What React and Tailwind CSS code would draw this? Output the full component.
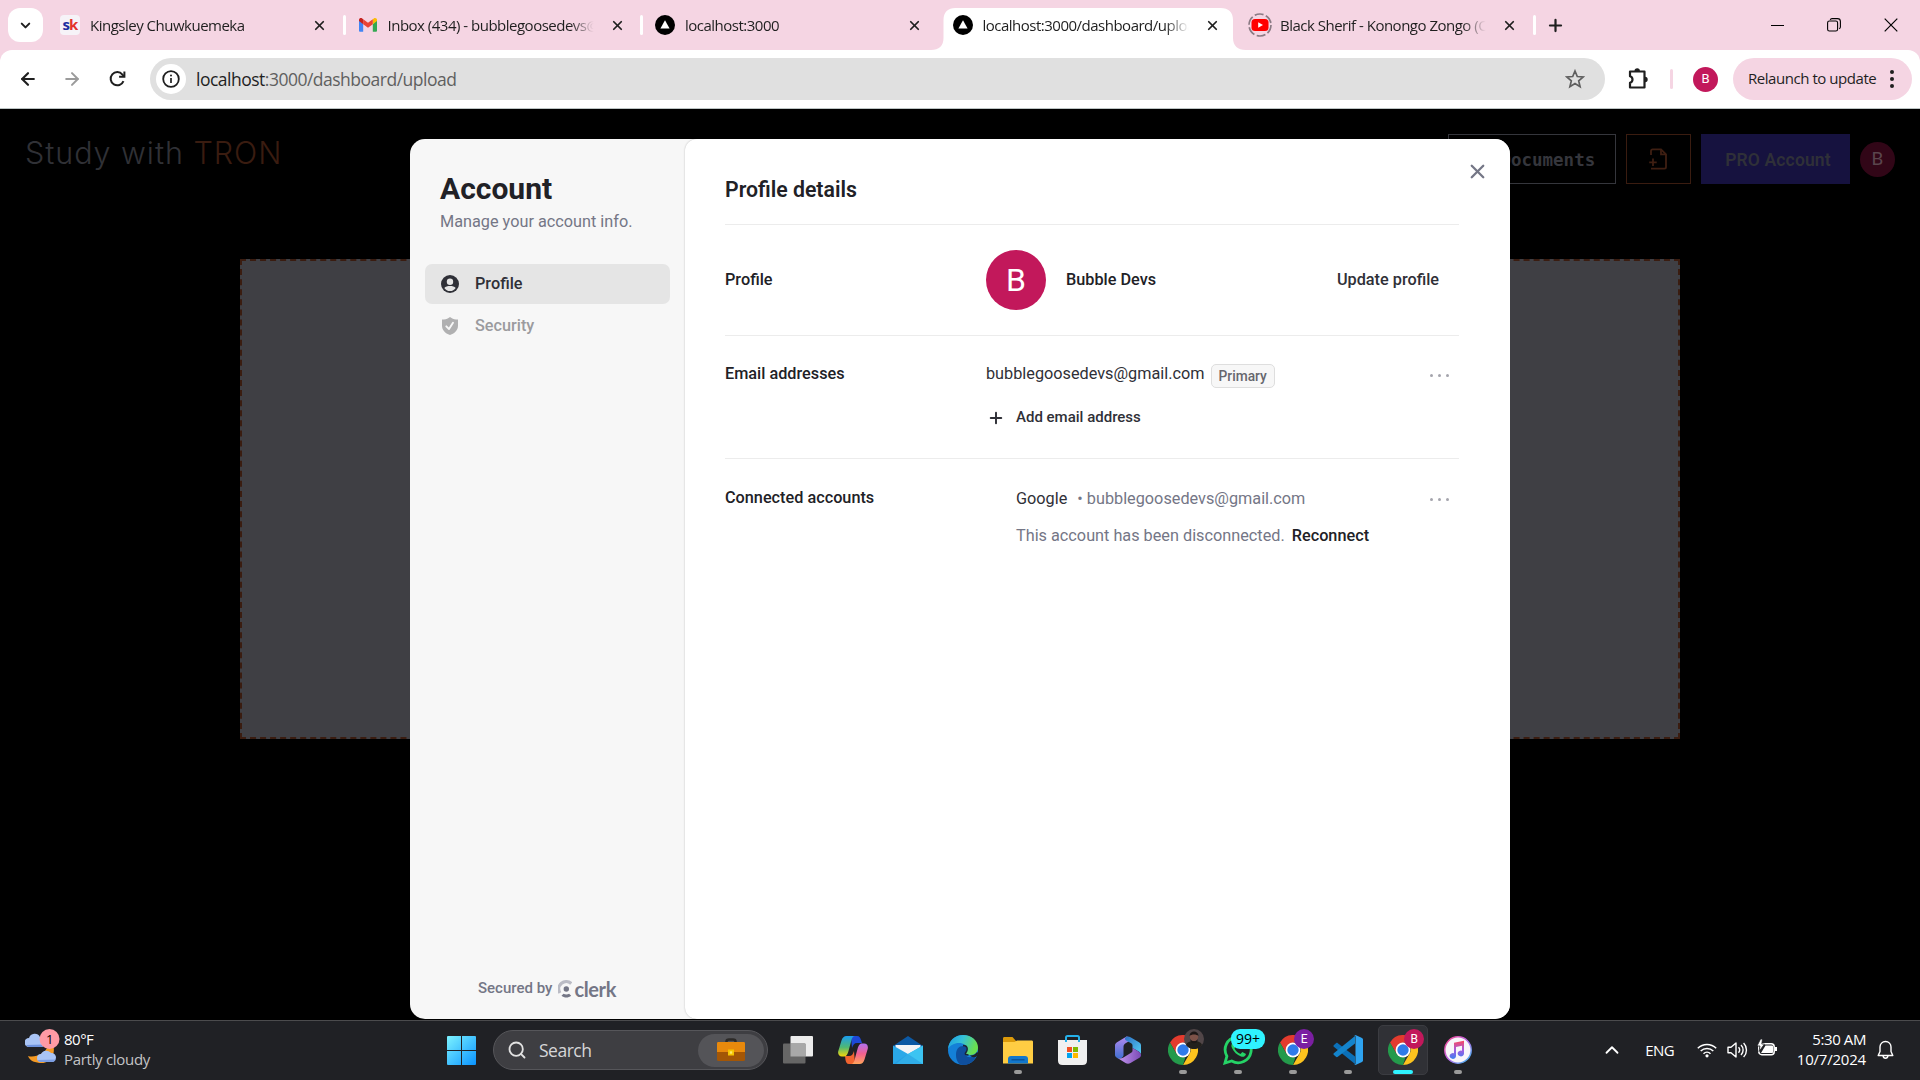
import {
  ArrowLeft,
  ArrowRight,
  ChevronDown,
  ChevronUp,
  Plus,
  Search,
  X,
} from "lucide-react";

const TABS = [
  { key: "sk", title: "Kingsley Chuwkuemeka", icon: SkIcon },
  { key: "mail", title: "Inbox (434) - bubblegoosedevs@", icon: GmailIcon },
  { key: "local", title: "localhost:3000", icon: NextIcon },
  { key: "upload", title: "localhost:3000/dashboard/uploa", icon: NextIcon, active: true },
  { key: "yt", title: "Black Sherif - Konongo Zongo (O", icon: YoutubeIcon },
];

function SkIcon() {
  return (
    <div className="w-5 h-5 rounded bg-[#f6f3f8] flex items-center justify-center text-[15px] leading-none font-bold tracking-[-0.8px] font-['Open_Sans',sans-serif] pb-0.5">
      <span className="text-[#1c2fa0]">s</span>
      <span className="text-[#e2332d]">k</span>
    </div>
  );
}

function GmailIcon() {
  return (
    <svg width="20" height="20" viewBox="0 0 20 20">
      <path d="M1 5v10.5c0 .8.5 1.3 1.200 1.300H5.200V9z" fill="#4285f4" />
      <path d="M19 5v10.500c0 .8-.5 1.300-1.200 1.300H14.800V9z" fill="#34a853" />
      <path d="M14.800 4.200V9.200L19 6V4.800c0-1.700-2-2.500-3.200-1.400z" fill="#fbbc04" />
      <path d="M5.200 9.200V4.200L10 7.800l4.800-3.600v5L10 12.800z" fill="#ea4335" />
      <path d="M1 4.800V6l4.200 3.200v-5l-1-.8C3 2.500 1 3.200 1 4.800z" fill="#c5221f" />
    </svg>
  );
}

function NextIcon() {
  return (
    <svg width="20" height="20" viewBox="0 0 20 20">
      <circle cx="10" cy="10" r="10" fill="#000" />
      <path d="M10 5.200l4.600 8.300H5.400z" fill="#fff" />
    </svg>
  );
}

function YoutubeIcon() {
  return (
    <svg width="24" height="24" viewBox="0 0 24 24" className="-ml-0.5 -mr-0.5 max-w-none">
      <circle cx="12" cy="12" r="11" fill="none" stroke="#8a7a84" strokeWidth="1.700" strokeDasharray="9 2.520" />
      <rect x="3.500" y="6" width="17" height="12" rx="3.500" fill="#f00" />
      <path d="M10.200 9.300v5.400l4.800-2.700z" fill="#fff" />
    </svg>
  );
}

function Tab({ title, icon: Icon, active }) {
  return (
    <div className="relative w-[297.5px] h-full pl-3 pt-[3px] flex items-center">
      {active && (
        <svg className="absolute left-[-10px] top-2" width="316" height="42" viewBox="0 0 316 42">
          <path d="M0 42c8 0 12.500-4 12.500-12V12C12.500 4 17 0 24.500 0h265c8 0 12.500 4 12.500 12v18c0 8 5 12 12.500 12z" fill="#fff" />
        </svg>
      )}
      <div className="relative flex items-center w-full pb-[3px]">
        <div className="w-5 shrink-0">
          <Icon />
        </div>
        <div className="ml-2.5 pb-px w-[212px] shrink-0 overflow-hidden whitespace-nowrap text-[15px] leading-5 tracking-[-0.5px] text-[#1f1f1f] [mask-image:linear-gradient(to_right,#000_86%,transparent_97%)]">
          {title}
        </div>
        <X size={15} strokeWidth={2.8} className="ml-[10px] text-[#1f1f1f]" />
      </div>
      {!active && title !== "localhost:3000" && (
        <div className="absolute right-0 top-[15px] w-[3px] h-5 rounded bg-white" />
      )}
    </div>
  );
}

function TabStrip() {
  return (
    <div className="h-[50px] shrink-0 bg-[#f5d5e3] flex items-center pl-2 font-['Open_Sans',sans-serif]">
      <div className="w-[35px] h-[34px] rounded-xl bg-white flex items-center justify-center mr-[5px]">
        <ChevronDown size={15} strokeWidth={3.2} className="text-[#1f1f1f]" />
      </div>
      {TABS.map((t) => (
        <Tab key={t.key} title={t.title} icon={t.icon} active={t.active} />
      ))}
      <Plus size={19} strokeWidth={2.800} className="ml-[10px] text-[#1f1f1f]" />
      <div className="ml-auto flex items-center pr-[22px] gap-[43px]">
        <div className="w-[13px] h-px bg-black" />
        <svg width="14" height="14" viewBox="0 0 14 14" fill="none" stroke="#000" strokeWidth="1.100">
          <rect x="0.600" y="3" width="10" height="10" rx="1.800" />
          <path d="M3.200 1.900C3.500 1 4.200.6 5 .6h5.500c1.700 0 2.900 1.200 2.900 2.900V9c0 .8-.4 1.400-1.200 1.800" />
        </svg>
        <svg width="14" height="14" viewBox="0 0 14 14" fill="none" stroke="#000" strokeWidth="1.200">
          <path d="M.7.7l12.600 12.600M13.300.7L.7 13.300" />
        </svg>
      </div>
    </div>
  );
}

function Toolbar() {
  return (
    <div className="bg-[#f5d5e3] shrink-0">
      <div className="h-[59px] bg-white rounded-t-xl border-b border-[#bcc4c4] flex items-center pl-[18px] pr-2 font-['Open_Sans',sans-serif]">
        <ArrowLeft size={20} strokeWidth={2.600} className="text-[#1f1f1f]" />
        <ArrowRight size={20} strokeWidth={2.400} className="ml-6 text-[#9b9b9b]" />
        <svg className="ml-[27px]" width="17" height="18" viewBox="0 0 18 18" fill="none" stroke="#1f1f1f" strokeWidth="2.100">
          <path d="M15.300 11.200A7 7 0 1 1 14.200 4.300L16 6.300" />
          <path d="M16.300 1v5.600h-5.600" />
        </svg>
        <div className="ml-[24px] w-[1455px] h-[42px] rounded-full bg-[#e0e0e0] flex items-center pl-1.5 pr-5">
          <div className="w-[30px] h-[30px] rounded-full bg-white flex items-center justify-center">
            <svg width="18" height="18" viewBox="0 0 18 18">
              <circle cx="9" cy="9" r="7.800" fill="none" stroke="#1f1f1f" strokeWidth="1.800" />
              <path d="M9 8v5" stroke="#1f1f1f" strokeWidth="1.700" />
              <circle cx="9" cy="5.600" r="1" fill="#1f1f1f" />
            </svg>
          </div>
          <span className="ml-2.5 pt-px text-[17.5px] tracking-[-0.5px] text-[#5f5f5f]">
            <span className="text-[#1f1f1f]">localhost</span>:3000/dashboard/upload
          </span>
          <svg className="ml-auto" width="20" height="20" viewBox="0 0 20 20" fill="none" stroke="#5f5f5f" strokeWidth="1.700">
            <path d="M10 2l2.300 5.500 5.900.5-4.500 3.900 1.400 5.800L10 14.600l-5.100 3.100 1.400-5.800L1.800 8l5.900-.5z" />
          </svg>
        </div>
        <svg className="ml-[22px]" width="22" height="24" viewBox="0 0 22 24" fill="none" stroke="#1f1f1f" strokeWidth="2.200">
          <path d="M3 4.500h14.500v16H3v-4.800a3.300 3.300 0 0 0 0-6.400z" strokeLinejoin="round" />
          <path d="M7.500 4a2.700 2.700 0 0 1 5.400 0zM18 9.800a2.700 2.700 0 0 1 0 5.400z" fill="#1f1f1f" stroke="none" />
        </svg>
        <div className="ml-[21px] w-[3px] h-5 rounded bg-[#f5d5e3]" />
        <div className="ml-5 w-[25px] h-[25px] rounded-full bg-[#c2185b] text-white text-[13px] font-['Roboto',sans-serif] flex items-center justify-center">
          B
        </div>
        <div className="ml-auto w-[179px] h-[42px] rounded-full bg-[#f5d5e3] flex items-center pl-[15px] pr-[18px]">
          <span className="pb-px text-[15px] tracking-[-0.45px] whitespace-nowrap text-[#1f1f1f]">
            Relaunch to update
          </span>
          <div className="ml-auto flex flex-col gap-[3px]">
            <div className="w-1 h-1 rounded-full bg-[#1f1f1f]" />
            <div className="w-1 h-1 rounded-full bg-[#1f1f1f]" />
            <div className="w-1 h-1 rounded-full bg-[#1f1f1f]" />
          </div>
        </div>
      </div>
    </div>
  );
}

function Dashboard() {
  return (
    <div className="h-full bg-black">
      <header className="h-[100px] pl-[25px] pr-[25px] pt-[25px] flex items-start">
        <h1 className="text-[30.5px] leading-[38px] font-light tracking-[0.95px] text-[#303136] font-['Inter',sans-serif] whitespace-nowrap">
          Study with <span className="text-[#3a1c10]">TRON</span>
        </h1>
        <div className="ml-auto flex items-center">
          <div className="w-[168px] h-[50px] border border-[#35363c] pt-0.5 flex items-center justify-center text-[#35363c] text-[17.5px] font-bold font-['DejaVu_Sans_Mono',monospace] whitespace-nowrap">
            My Documents
          </div>
          <div className="ml-2.5 w-[65px] h-[50px] border border-[#3a1c10] flex items-center justify-center">
            <svg width="20" height="22" viewBox="0 0 20 22" fill="none" stroke="#3f1f12" strokeWidth="1.800" className="-ml-0.5">
              <path d="M3 7V3c0-1 .6-1.600 1.600-1.600H13l5 5V19c0 1-.6 1.600-1.600 1.600H3" />
              <path d="M13 1.400v5h5M5 10.500v7.500M1.200 14.300h7.500" />
            </svg>
          </div>
          <div className="ml-2.5 w-[149px] h-[50px] pl-[5px] pt-0.5 bg-[#16123f] flex items-center justify-center text-[#2f3038] text-[17.5px] tracking-[0.15px] font-semibold font-['Roboto',sans-serif]">
            PRO Account
          </div>
          <div className="ml-2.5 w-[35px] h-[35px] rounded-full bg-[#310617] flex items-center justify-center text-[#5a454d] text-[19px] font-['Roboto',sans-serif]">
            B
          </div>
        </div>
      </header>
      <div className="mx-auto mt-[50px] w-[1440px] h-[480px] bg-[#3f3f44] border-2 border-dashed border-[#3a1c10]" />
    </div>
  );
}

function MoreDots() {
  return (
    <div className="flex gap-[5px]">
      <div className="w-[3px] h-[3px] rounded-full bg-[#a5a5ad]" />
      <div className="w-[3px] h-[3px] rounded-full bg-[#a5a5ad]" />
      <div className="w-[3px] h-[3px] rounded-full bg-[#a5a5ad]" />
    </div>
  );
}

function Sidebar() {
  return (
    <div className="w-[275px] shrink-0 flex flex-col px-[15px] pt-[30px] pb-5">
      <h2 className="px-[15px] text-[30px] leading-10 font-bold text-[#212126]">
        Account
      </h2>
      <p className="px-[15px] mt-0.5 text-[16.25px] leading-[22px] text-[#747686]">
        Manage your account info.
      </p>
      <div className="mt-[31px] w-[245px] h-10 rounded-[7px] bg-[#e5e5e5] flex items-center px-4 text-[#2f3037]">
        <svg width="18" height="18" viewBox="0 0 18 18">
          <circle cx="9" cy="9" r="9" fill="#2f3037" />
          <circle cx="9" cy="6.700" r="3.200" fill="#e5e5e5" />
          <path d="M3.300 13c1.200-1.600 3.200-2 5.700-2s4.500.4 5.700 2A7 7 0 0 1 9 16.100 7 7 0 0 1 3.300 13z" fill="#e5e5e5" />
        </svg>
        <span className="ml-4 text-[16.25px] font-medium">Profile</span>
      </div>
      <div className="mt-0.5 w-[245px] h-10 flex items-center px-4 text-[#9b9b9e]">
        <svg width="18" height="18" viewBox="0 0 18 18">
          <path d="M9 0l1.500 1c1.800 1 3.700 1.500 6.500 1.500v6c0 4.700-3 7.700-8 9.500-5-1.800-8-4.800-8-9.500v-6c2.800 0 4.700-.5 6.500-1.500z" fill="#b0b0b1" />
          <path d="M5.300 9.300L8 12l4-6.300" fill="none" stroke="#f7f7f7" strokeWidth="1.900" strokeLinecap="round" strokeLinejoin="round" />
        </svg>
        <span className="ml-4 text-[16.25px] font-medium">Security</span>
      </div>
      <div className="mt-auto pl-[53px] flex items-center text-[#747686]">
        <span className="text-[15px] font-medium">Secured by</span>
        <svg className="ml-1.5 mt-0.5" width="14" height="18" viewBox="0 0 14 18">
          <path d="M13.300 3.500A7.500 7.500 0 0 0 1.900 13" fill="none" stroke="#bbbcc5" strokeWidth="3.200" />
          <circle cx="8.300" cy="9" r="2.700" fill="#747686" />
          <path d="M3.500 15.800l2-2c1.700 1 3.900 1 5.600 0l2.100 2c-2.700 2.400-7 2.400-9.700 0z" fill="#747686" />
        </svg>
        <span className="ml-0.5 mt-0.5 text-[20px] leading-5 font-bold tracking-[-0.35px] font-['Lato',sans-serif]">
          clerk
        </span>
      </div>
    </div>
  );
}

function ProfilePanel() {
  return (
    <div className="relative flex-1 bg-white rounded-xl pl-10 pr-[51px] shadow-[0_0_2px_rgba(0,0,0,0.25)] text-[16.25px] text-[#212126]">
      <X size={23} strokeWidth={2.400} className="absolute right-[21px] top-[21px] text-[#747686]" />
      <div className="h-[86px] border-b border-[#ececec] pt-[36.5px] text-[21.25px] leading-7 font-semibold">
        Profile details
      </div>
      <div className="h-[111px] border-b border-[#ececec] flex items-center">
        <div className="w-[261px] font-medium">Profile</div>
        <div className="w-[60px] h-[60px] rounded-full bg-[#c2185b] text-white text-[32px] flex items-center justify-center">
          B
        </div>
        <div className="ml-5 font-medium">Bubble Devs</div>
        <div className="ml-auto mr-5 font-medium text-[#2f3037]">Update profile</div>
      </div>
      <div className="h-[123px] border-b border-[#ececec] flex items-start pt-[27px]">
        <div className="w-[261px] leading-[22px] font-medium">Email addresses</div>
        <div>
          <div className="flex items-start leading-[22px]">
            <span className="text-[#2f3037]">bubblegoosedevs@gmail.com</span>
            <span className="ml-[6px] mt-[1px] h-6 px-[7px] rounded-[5px] border border-[#dedede] bg-[#f7f7f7] text-[13.75px] leading-[23px] font-medium text-[#66666d]">
              Primary
            </span>
          </div>
          <div className="mt-[18px] ml-px flex items-center leading-[22px] text-[#2f3037]">
            <Plus size={18} strokeWidth={2.600} className="mt-px" />
            <span className="ml-[11px] text-[15px] font-medium">Add email address</span>
          </div>
        </div>
        <div className="ml-auto mr-2.5 mt-[11px]">
          <MoreDots />
        </div>
      </div>
      <div className="flex items-start pt-[28px]">
        <div className="w-[291px] leading-[22px] font-medium">Connected accounts</div>
        <div className="mt-px">
          <div className="leading-[22px] flex">
            <span className="text-[#2f3037]">Google</span>
            <span className="ml-[10px] text-[#747686]">• bubblegoosedevs@gmail.com</span>
          </div>
          <div className="mt-[15px] leading-[22px] text-[#747686]">
            This account has been disconnected.
            <span className="ml-[7px] font-medium text-[#212126]">Reconnect</span>
          </div>
        </div>
        <div className="ml-auto mr-2.5 mt-[11px]">
          <MoreDots />
        </div>
      </div>
    </div>
  );
}

function AccountModal() {
  return (
    <div className="w-[1100px] h-[880px] rounded-[15px] overflow-hidden bg-[#f7f7f7] flex font-['Roboto',sans-serif]">
      <Sidebar />
      <ProfilePanel />
    </div>
  );
}

function WeatherIcon() {
  return (
    <svg width="36" height="36" viewBox="0 0 36 36">
      <path d="M3 27c7 2 17-2 20-10l5-2c3 10-2 19-11 19C10 34 5 32 3 27z" fill="#f59a23" />
      <path d="M4 18a4.500 4.500 0 0 1 0-9 6 6 0 0 1 11-1c3 0 5 2 5 5s-2 5-4 5z" fill="#a9c4f5" />
      <path d="M1 16c1 1.500 2 2 4 2h11c2 0 3-1 4-2.500z" fill="#6f93dd" />
      <path d="M16 33a4 4 0 0 1 0-8 6 6 0 0 1 10-1c3 0 5 2 5 4.500S29 33 27 33z" fill="#a9c4f5" />
      <path d="M12.500 31c1 1.500 2 2 3.500 2h11c2 0 3-1 3.800-2.500z" fill="#7b9de2" />
      <circle cx="24.500" cy="10" r="10" fill="#ff9aa5" />
    </svg>
  );
}

function WindowsIcon() {
  return (
    <svg width="29" height="29" viewBox="0 0 29 29">
      <defs>
        <linearGradient id="win" x1="0" y1="0" x2="29" y2="29" gradientUnits="userSpaceOnUse">
          <stop offset="0" stopColor="#7df3ff" />
          <stop offset="1" stopColor="#0a93ff" />
        </linearGradient>
      </defs>
      <path d="M0 1a1 1 0 0 1 1-1h13v14H0zM15 0h13a1 1 0 0 1 1 1v13H15zM0 15h14v14H1a1 1 0 0 1-1-1zM15 15h14v13a1 1 0 0 1-1 1H15z" fill="url(#win)" />
    </svg>
  );
}

function BriefcaseIcon() {
  return (
    <svg width="28" height="24" viewBox="0 0 28 24">
      <path d="M9.500 5V3.500C9.500 2 10.500 1.500 12 1.500h4c1.500 0 2.500.5 2.500 2V5" fill="none" stroke="#2c2a28" strokeWidth="2.500" />
      <rect y="4" width="28" height="19" rx="1.500" fill="#a35606" />
      <path d="M0 5.500C0 4.500.5 4 1.500 4h25c1 0 1.500.5 1.500 1.500V14H0z" fill="#e8890c" />
      <rect x="11" y="11.500" width="6" height="6" fill="#f5c400" />
      <rect x="12.800" y="13.300" width="2.400" height="2.400" fill="#ffe96b" />
    </svg>
  );
}

function TaskViewIcon() {
  return (
    <svg width="30" height="28" viewBox="0 0 30 28">
      <rect x="7.500" width="22.500" height="20.500" rx="1" fill="#ececec" />
      <rect y="7.500" width="22.500" height="20" rx="1" fill="#666" />
      <path d="M7.500 7.500h15v13h-15z" fill="#a8a8a8" />
    </svg>
  );
}

function CopilotIcon() {
  return (
    <svg width="30" height="28" viewBox="0 0 30 28">
      <defs>
        <linearGradient id="copA" x1="0" y1="0" x2="0" y2="1">
          <stop offset="0" stopColor="#1a9df0" />
          <stop offset=".55" stopColor="#4fb873" />
          <stop offset="1" stopColor="#f5d60a" />
        </linearGradient>
        <linearGradient id="copB" x1="0" y1="0" x2="0" y2="1">
          <stop offset="0" stopColor="#b070f0" />
          <stop offset=".5" stopColor="#f2608f" />
          <stop offset="1" stopColor="#ffa45a" />
        </linearGradient>
      </defs>
      <path d="M13 0h6c2.500 0 3.300 1.800 4 4l1 3h-5c-3 0-4 2-5 5z" fill="#1d48d8" />
      <path d="M17 28h-6c-2.500 0-3-2-3.500-4L7 20h4c3 0 4-2 5-5z" fill="#f0632f" />
      <path d="M8.500 0H17c-2 0-3 2-3.500 4L10.500 15c-1 3.500-2 5.500-5 5.500H4C1 20.500-.5 18 .3 15L3.500 4.500C4.500 1.500 6 0 8.500 0z" fill="url(#copA)" />
      <path d="M21.500 28H13c2 0 3-2 3.500-4l3-11c1-3.500 2-5.500 5-5.500H26c3 0 4.500 2.500 3.700 5.500l-3.200 10.500c-1 3-2.500 4.500-5 4.500z" fill="url(#copB)" />
    </svg>
  );
}

function MailIcon() {
  return (
    <svg width="30" height="28" viewBox="0 0 30 28">
      <path d="M0 10L15 0l15 10v4H0z" fill="#0c59a4" />
      <path d="M2.500 9h25v8l-12.500 5L2.500 17z" fill="#f4f4f6" />
      <path d="M0 9.500L15 18l15-8.500V28H0z" fill="#2aa8e8" />
      <path d="M30 9.500V28H3l12-10z" fill="#3cc4f2" />
      <path d="M15 18l15 10H0z" fill="#2193dc" opacity=".45" />
    </svg>
  );
}

function EdgeIcon() {
  return (
    <svg width="30" height="30" viewBox="0 0 30 30">
      <defs>
        <linearGradient id="edgeTop" x1="0" y1="0" x2="1" y2="0.300">
          <stop offset="0" stopColor="#1b9de2" />
          <stop offset=".5" stopColor="#35c1d8" />
          <stop offset="1" stopColor="#6adf4f" />
        </linearGradient>
      </defs>
      <circle cx="15" cy="15" r="15" fill="#1480d8" />
      <path d="M8 20c0-6 3-9 7-9 3 0 4 2 4 3.500C19 16 17.500 17 17.500 19c0 2.500 3 3.500 6 3 2.300-.4 3.800-1 4.800-1.300C26 26.500 21 30 15 30c-4 0-7-4-7-10z" fill="#0f4f9e" />
      <path d="M0 14C.8 5.500 7 0 15 0c9 0 15 6 15 12.500 0 4.500-3 7.500-7.500 7.500-3 0-5-.8-5-2 0-1 1.700-1.700 1.700-4 0-3.500-3.500-6-8.200-6C6 8 2 10.500 0 14z" fill="url(#edgeTop)" />
      <path d="M20.500 20c-3 0-3.500-1-3-2 .7-1 1.700-1.700 1.700-4 0-2.200-2-3.500-4.200-3.500" fill="none" stroke="#1b2436" strokeWidth="1.500" />
      <path d="M22 20.500c3 0 5.500-1 7-3.500l1.500 1-2 3.500c-2 1-5 1-6.500-1z" fill="#202125" />
    </svg>
  );
}

function ExplorerIcon() {
  return (
    <svg width="30" height="27" viewBox="0 0 30 27">
      <path d="M0 1.500C0 .5.500 0 1.500 0h8l3.500 4v6H0z" fill="#dc9a0a" />
      <path d="M0 5h11.500L14 3.500h14.500c1 0 1.500.5 1.500 1.500v21.500H0z" fill="#ffcd43" />
      <path d="M5 26.500V22c0-2 1-3 3-3h14c2 0 3 1 3 3v4.500z" fill="#1277cc" />
      <path d="M8.500 22.800h13" stroke="#0b4f93" strokeWidth="1.300" />
    </svg>
  );
}

function StoreIcon() {
  return (
    <svg width="29" height="30" viewBox="0 0 29 30" className="-ml-px">
      <path d="M8 7V2.500C8 1.500 8.500 1 9.500 1h10c1 0 1.500.5 1.500 1.500V7" fill="none" stroke="#25b1ea" strokeWidth="2" />
      <path d="M0 5h29v20.500c0 3-1.500 4.500-4.500 4.500h-20C1.500 30 0 28.500 0 25.500z" fill="#f0f0f0" />
      <path d="M8 5v2M21 5v2" stroke="#25b1ea" strokeWidth="2" />
      <path d="M9 12h5v5H9z" fill="#f25022" />
      <path d="M15 12h5v5h-5z" fill="#7fba00" />
      <path d="M9 18h5v5H9z" fill="#00a4ef" />
      <path d="M15 18h5v5h-5z" fill="#ffb900" />
    </svg>
  );
}

function OfficeIcon() {
  return (
    <svg width="26" height="28" viewBox="0 0 26 28">
      <defs>
        <linearGradient id="offA" x1="0" y1="0" x2="0" y2="1">
          <stop offset="0" stopColor="#b58af0" />
          <stop offset="1" stopColor="#3f6fd0" />
        </linearGradient>
        <linearGradient id="offB" x1="0" y1="0" x2="1" y2="1">
          <stop offset="0" stopColor="#2c6fc4" />
          <stop offset="1" stopColor="#55d0f5" />
        </linearGradient>
        <linearGradient id="offC" x1="0" y1="0" x2="1" y2="0">
          <stop offset="0" stopColor="#c79af2" />
          <stop offset="1" stopColor="#7a4ab5" />
        </linearGradient>
      </defs>
      <path d="M12 .3L2 6.300C.7 7.100 0 8.300 0 9.500V19c0 1.200.7 2 2 2.800l1 .7c2 .7 5-.5 5.500-3V11c0-1.500.5-2.700 1.700-3.500L16 4z" fill="url(#offA)" />
      <path d="M10.500 1.200c1.500-1 3.500-1 5 0l8.500 5c1.300.8 2 1.800 2 3V19c0-1.500-1-2.700-2.200-3.500L17.500 12V9.500c0-1-.5-1.700-1.300-2.200L11 4.500c-1-.7-1.500-2-.5-3.300z" fill="url(#offB)" />
      <path d="M2.500 22c1.500.8 3.800.7 5.500-.3l8.500-5.200c.6-.4 1-1 1-1.700V12l6.500 3.700c1.300.8 2 2 2 3.300s-.7 2.200-2 3l-8.500 5c-1.500.9-3.500.9-5 0z" fill="url(#offC)" />
    </svg>
  );
}

function ChromeIcon() {
  return (
    <svg width="30" height="30" viewBox="0 0 30 30">
      <path d="M2 7.500A15 15 0 0 1 28 7.500H15L8.500 18.700z" fill="#e33b2e" />
      <path d="M28 7.500A15 15 0 0 1 15 30l6.500-11.200A7.500 7.500 0 0 0 21.500 11L19 7.500z" fill="#fcc31e" />
      <path d="M2 7.500l6.500 11.200c2 3 5 4 9 3.200L15 30A15 15 0 0 1 2 7.500z" fill="#249a4b" />
      <circle cx="15" cy="15" r="7.400" fill="#fff" />
      <circle cx="15" cy="15" r="5.700" fill="#2f7bea" />
    </svg>
  );
}

function WhatsappIcon() {
  return (
    <svg width="30" height="30" viewBox="0 0 30 30">
      <path d="M2 28l1.900-6.800A13 13 0 1 1 8.700 26z" fill="none" stroke="#25d366" strokeWidth="2.800" />
      <path d="M10.500 7.500c-2 1-2.800 3-1.500 5.500 1.800 4 5 7 9 8.500 2.500 1 4.500-.3 5-2.500l-3.700-2-1.800 2c-2.800-1.200-4.700-3-6-5.500l1.500-2z" fill="#25d366" />
    </svg>
  );
}

function VscodeIcon() {
  return (
    <svg width="30" height="30" viewBox="0 0 30 30">
      <path d="M1 10l2-1.800c.6-.5 1.200-.5 1.800 0L22 21.500V29L.8 11.800c-.6-.6-.5-1.200.2-1.800z" fill="#0b70b8" />
      <path d="M1 20l2 1.800c.6.5 1.200.5 1.800 0L22 8.500V1L.8 18.200c-.6.6-.5 1.200.2 1.800z" fill="#1484cc" />
      <path d="M22.500 0l6 2.700c1 .5 1.500 1 1.500 2v20.600c0 1-.5 1.500-1.500 2l-6 2.700c-.8.3-1.300.1-1.800-.4 1 .5 1.800 0 1.800-1.100v-27c0-1.100-.8-1.600-1.800-1.100.500-.5 1-.7 1.800-.4z" fill="#2ea3f0" />
    </svg>
  );
}

function ItunesIcon() {
  return (
    <svg width="28" height="28" viewBox="0 0 28 28">
      <defs>
        <linearGradient id="itRing" x1="0" y1="0" x2="1" y2="1">
          <stop offset="0" stopColor="#f8488c" />
          <stop offset=".5" stopColor="#b968e8" />
          <stop offset="1" stopColor="#35c5f5" />
        </linearGradient>
        <linearGradient id="itNote" x1="0" y1="0" x2="0" y2="1">
          <stop offset="0" stopColor="#f94860" />
          <stop offset=".5" stopColor="#a45ce0" />
          <stop offset="1" stopColor="#3f7ef0" />
        </linearGradient>
      </defs>
      <circle cx="14" cy="14" r="13.200" fill="#f8f6fa" stroke="url(#itRing)" strokeWidth="1.500" />
      <path d="M10 6.800L20 4.800V17.500a3.200 2.900 0 1 1-2-2.700V9.700l-6 1.200V20a3.200 2.900 0 1 1-2-2.700z" fill="url(#itNote)" />
    </svg>
  );
}

const APPS = [
  { key: "taskview", icon: TaskViewIcon },
  { key: "copilot", icon: CopilotIcon },
  { key: "mail", icon: MailIcon },
  { key: "edge", icon: EdgeIcon },
  { key: "explorer", icon: ExplorerIcon, running: true },
  { key: "store", icon: StoreIcon },
  { key: "office", icon: OfficeIcon },
  { key: "chrome1", icon: ChromeIcon, running: true, photo: true },
  { key: "whatsapp", icon: WhatsappIcon, running: true, count: "99+" },
  { key: "chrome2", icon: ChromeIcon, running: true, badge: "E", badgeCls: "bg-[#7b1fa2]" },
  { key: "vscode", icon: VscodeIcon, running: true },
  { key: "chrome3", icon: ChromeIcon, active: true, badge: "B", badgeCls: "bg-[#c2185b]" },
  { key: "itunes", icon: ItunesIcon, running: true },
];

function TaskbarApp({ app }) {
  const Icon = app.icon;
  return (
    <div className="w-[55px] h-full pb-px flex items-center justify-center">
      <div
        className={`relative w-[50px] h-[50px] rounded-[5px] border flex items-center justify-center ${
          app.active ? "bg-[#303136] border-[#3b3c41]" : "border-transparent"
        }`}
      >
        <Icon />
        {app.badge && (
          <div
            className={`absolute left-[25px] top-[3px] w-5 h-5 rounded-full flex items-center justify-center text-[12px] text-white font-['Roboto',sans-serif] ${app.badgeCls}`}
          >
            {app.badge}
          </div>
        )}
        {app.photo && (
          <svg className="absolute left-[25px] top-[3px]" width="20" height="20" viewBox="0 0 20 20">
            <circle cx="10" cy="10" r="10" fill="#514648" />
            <path d="M2 16c1-3 4-4 8-4s7 1 8 4c-4 5.500-12 5.500-16 0z" fill="#22201c" />
            <circle cx="10" cy="8" r="4.200" fill="#7d5248" />
            <path d="M5.500 7c0-6 9-6 9 0-2-2-7-2-9 0zM6.500 10c1 3 6 3 7 0v2c-1 3-6 3-7 0z" fill="#1c1716" />
          </svg>
        )}
        {app.count && (
          <div className="absolute left-[17px] top-[3px] w-[34px] h-5 rounded-[9px] bg-[#2ff3ff] text-black text-[14px] tracking-normal flex items-center justify-center">
            {app.count}
          </div>
        )}
        {app.running && (
          <div className="absolute bottom-0 w-2 h-1 rounded-full bg-[#9a9a9a]" />
        )}
        {app.active && (
          <div className="absolute bottom-0 w-5 h-1 rounded-full bg-[#2ff3ff]" />
        )}
      </div>
    </div>
  );
}

function Taskbar() {
  return (
    <div className="h-[60px] shrink-0 bg-[#202125] border-t border-[#4b4b4d] flex items-center text-white text-[15px] tracking-[-0.3px] leading-5 font-['Open_Sans',sans-serif]">
      <div className="w-[447px] flex items-center pl-[25px] pb-1">
        <div className="relative -mt-1">
          <WeatherIcon />
          <span className="absolute left-[21px] top-0 text-black text-[13px]">1</span>
        </div>
        <div className="ml-[3px]">
          <div className="tracking-[-0.5px]">80°F</div>
          <div className="text-[#c4c4c6]">Partly cloudy</div>
        </div>
      </div>
      <WindowsIcon />
      <div className="ml-[17px] mb-px w-[275px] h-10 rounded-full bg-[#3e3e42] border border-[#56565a] flex items-center pl-[13px] pr-[3px]">
        <Search size={20} strokeWidth={2.200} className="text-[#e2e2e2]" />
        <span className="ml-3 pb-px text-[17.5px] tracking-[-0.5px] text-[#d6d6d8]">Search</span>
        <div className="ml-auto w-[66px] h-[33px] rounded-full bg-[#545458] flex items-center justify-center">
          <BriefcaseIcon />
        </div>
      </div>
      <div className="ml-[2.5px] h-full flex">
        {APPS.map((app) => (
          <TaskbarApp key={app.key} app={app} />
        ))}
      </div>
      <div className="ml-auto flex items-center pr-[26px] pb-0.5">
        <ChevronUp size={22} strokeWidth={2} />
        <span className="ml-[22px] tracking-[-0.6px]">ENG</span>
        <svg className="ml-[23px]" width="20" height="16" viewBox="0 0 20 16" fill="none" stroke="#fff" strokeWidth="1.500">
          <path d="M.8 6.200a13 13 0 0 1 18.400 0M3.700 9a9 9 0 0 1 12.600 0M6.500 11.700a5 5 0 0 1 7 0" />
          <circle cx="10" cy="13.800" r="1.600" fill="#fff" stroke="none" />
        </svg>
        <svg className="ml-[10px]" width="21" height="18" viewBox="0 0 21 18" fill="none" stroke="#fff" strokeWidth="1.400" strokeLinejoin="round">
          <path d="M1 6.200h3L9 2v14l-5-4.200H1zM11.500 6.300a4 4 0 0 1 0 5.400M14 4a7 7 0 0 1 0 10M16.600 2a10 10 0 0 1 0 14" />
        </svg>
        <svg className="ml-[9px] mb-1" width="21" height="18" viewBox="0 0 21 18">
          <rect x="1.800" y="4.700" width="15.400" height="11" rx="3" fill="none" stroke="#fff" strokeWidth="1.500" />
          <path d="M18 8h2v4h-2z" fill="#fff" />
          <path d="M8.500 6.500H15c.6 0 1 .4 1 1v5.500c0 .6-.4 1-1 1H4z" fill="#fff" />
          <path d="M3.500 0L0 7h3L2 12.500 7.500 5H4.800L5.500 0z" fill="#fff" stroke="#202125" strokeWidth=".8" />
        </svg>
        <div className="ml-[18px] pb-0.5 w-[70px] text-right whitespace-nowrap">
          <div className="tracking-[-0.4px]">5:30 AM</div>
          <div className="tracking-[-0.2px]">10/7/2024</div>
        </div>
        <svg className="ml-[11px]" width="17" height="20" viewBox="0 0 17 20" fill="none" stroke="#fff" strokeWidth="1.400" strokeLinejoin="round">
          <path d="M8.500 1.500c-3.300 0-5.500 2.500-5.500 5.500v4.500L1.200 15.500h14.600L14 11.500V7c0-3-2.200-5.500-5.500-5.500zM6 15.800c.3 1.600 1.200 2.400 2.500 2.400s2.200-.8 2.500-2.400" />
        </svg>
      </div>
    </div>
  );
}

export default function App() {
  return (
    <div className="w-[1920px] h-[1080px] flex flex-col overflow-hidden bg-black">
      <TabStrip />
      <Toolbar />
      <main className="relative flex-1 min-h-0">
        <Dashboard />
        <div className="absolute inset-0 flex justify-center pt-[30px]">
          <AccountModal />
        </div>
      </main>
      <Taskbar />
    </div>
  );
}
